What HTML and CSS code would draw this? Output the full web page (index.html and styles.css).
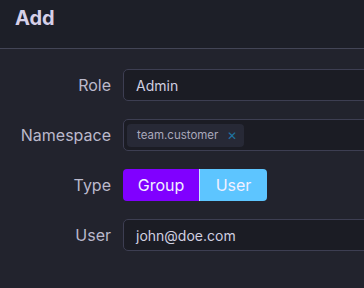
FILE: index.html
```html
<!DOCTYPE html>
<html lang="en">
<head>
  <meta charset="UTF-8" />
  <title>Add</title>
  <link rel="stylesheet" href="styles.css">
</head>
<body>
  <div class="modal-head">
    <h2>Add</h2>
  </div>

  <form class="modal-form">
    <label>Role</label>
    <div class="field">Admin</div>

    <label>Namespace</label>
    <div class="field tags">
      <span class="chip">team.customer <span class="chip-x">&#x2715;</span></span>
    </div>

    <label>Type</label>
    <div class="switch">
      <button type="button" class="switch-btn active">Group</button>
      <button type="button" class="switch-btn">User</button>
    </div>

    <label>User</label>
    <div class="field">john@doe.com</div>
  </form>
</body>
</html>
```

FILE: styles.css
```css
* {
  margin: 0;
  padding: 0;
  box-sizing: border-box;
  font-family: 'Inter', sans-serif;
}

body {
  background: #22232d;
  color: #d0cfe0;
  width: 364px;
  height: 288px;
  overflow: hidden;
}

.modal-head {
  height: 49px;
  background: #1d1f28;
  border-bottom: 1px solid #434556;
  padding: 4px 15px 0;
}

h2 {
  font-size: 20px;
  font-weight: 700;
  color: #d6d0e8;
  line-height: 28px;
}

.modal-form {
  display: grid;
  grid-template-columns: 111px 460px;
  column-gap: 12px;
  row-gap: 18px;
  padding-top: 20px;
  align-items: center;
}

label {
  text-align: right;
  font-size: 16px;
  color: #bbb9cc;
}

.field {
  height: 32px;
  display: flex;
  align-items: center;
  padding: 0 12px;
  background: #1b1c24;
  border: 1px solid #3d3e52;
  border-radius: 5px;
  font-size: 14px;
  color: #d0cfe0;
}

.tags {
  padding: 0 3px;
}

.chip {
  display: flex;
  align-items: center;
  height: 23px;
  padding: 0 7px 0 10px;
  background: #272936;
  border-radius: 4px;
  font-size: 11.5px;
  color: #a9a8bb;
}

.chip-x {
  margin-left: 9px;
  font-size: 12px;
  color: #1f73a2;
}

.switch {
  display: flex;
}

.switch-btn {
  height: 32px;
  width: 67px;
  border: none;
  font-size: 16px;
  color: #f2f0ff;
  background: #5dc5ff;
  border-radius: 0 4px 4px 0;
}

.switch-btn.active {
  width: 77px;
  background: #8000ff;
  border-radius: 4px 0 0 4px;
  border-right: 1px solid #c8e6ff;
}
```
